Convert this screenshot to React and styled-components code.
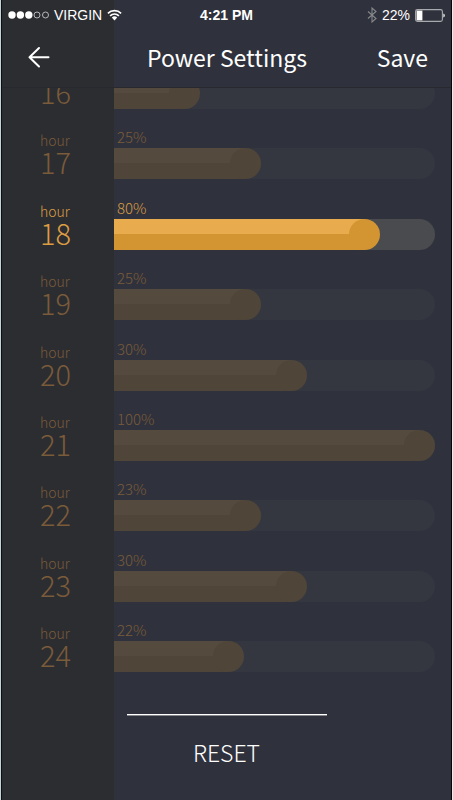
import { useState } from "react";
import styled, { createGlobalStyle } from "styled-components";

const GlobalStyle = createGlobalStyle`
  *, *::before, *::after { box-sizing: border-box; }
  body {
    margin: 0;
    background: #2f323c;
    font-family: "Noto Sans CJK SC", "Open Sans", sans-serif;
  }
  button {
    margin: 0;
    padding: 0;
    border: 0;
    background: none;
    color: inherit;
    font: inherit;
    cursor: pointer;
  }
`;

const SIDEBAR = "112px";

// Layout base
const Screen = styled.div`
  display: flex;
  flex-direction: column;
  height: 100dvh;
  min-height: 600px;
  overflow: hidden;
  color: #fff;
  border-left: 1px solid #0a1018;
  border-right: 1px solid #06070a;
  background: linear-gradient(to right, #2c2d31 ${SIDEBAR}, #2f323c 0);
`;

const Frame = styled.div`
  border-left: 1px solid #c9d0d4;
  border-right: 1px solid #eceded;
`;

// Status bar
const StatusBar = styled.div`
  display: grid;
  grid-template-columns: 1fr auto 1fr;
  align-items: center;
  height: 30px;
  padding: 0 6px;
  font-family: "Liberation Sans", Arial, sans-serif;
  font-size: 14px;
  line-height: 30px;
`;

const StatusGroup = styled.div`
  display: flex;
  align-items: center;
  justify-content: ${({ $end }) => ($end ? "flex-end" : "flex-start")};
  gap: 5px;
`;

const Clock = styled.time`
  font-weight: 700;
`;

// Header
const Header = styled.header`
  display: grid;
  grid-template-columns: 1fr auto 1fr;
  align-items: center;
  height: 58px;
  padding: 0 23px 4px 24px;
  font-size: 23px;
  line-height: 32px;
  border-bottom: 1px solid #28292f;
`;

const Title = styled.h1`
  margin: 0;
  font-size: 23px;
  font-weight: 400;
`;

const BackButton = styled.button`
  display: flex;
  justify-self: start;
`;

const SaveButton = styled.button`
  justify-self: end;
`;

// Hour list, first row is half scrolled under the header
const Viewport = styled.main`
  flex: 1;
  min-height: 0;
  overflow: hidden;
`;

const List = styled.ul`
  display: flex;
  flex-direction: column;
  justify-content: space-between;
  height: calc(100% + 30px);
  margin: -30px 0 0;
  padding: 0;
  list-style: none;
`;

const Row = styled.li`
  display: grid;
  grid-template-columns: ${SIDEBAR} 1fr;
  height: 51px;
  color: ${({ $active }) => ($active ? "#dc9d43" : "#7a5b3a")};
`;

const HourLabel = styled.label`
  display: flex;
  flex-direction: column;
  padding: 4px 0 0 38px;
  font-size: 14px;
  font-weight: 300;
  line-height: 16px;
`;

const HourNumber = styled.span`
  font-size: 29px;
  font-weight: 200;
  line-height: 26px;
`;

const Level = styled.div`
  padding-right: 16px;
`;

const Percent = styled.output`
  display: block;
  height: 20px;
  padding-left: 3px;
  font-size: 15px;
  font-weight: 200;
  line-height: 18px;
`;

const Slider = styled.input`
  --light: ${({ $active }) => ($active ? "#e8ab4d" : "#554a3e")};
  --dark: ${({ $active }) => ($active ? "#d39432" : "#504539")};
  --rail: ${({ $active }) => ($active ? "#4a4b4e" : "#343740")};
  display: block;
  width: 100%;
  height: 31px;
  margin: 0;
  appearance: none;
  border-radius: 0 16px 16px 0;
  cursor: pointer;
  background:
    linear-gradient(var(--light) 50%, var(--dark) 50%) 0 0 /
      calc(16px + (100% - 31px) * var(--level)) 100% no-repeat,
    var(--rail);

  &::-webkit-slider-thumb {
    appearance: none;
    width: 31px;
    height: 31px;
    border-radius: 50%;
    background: var(--dark);
  }

  &::-moz-range-thumb {
    width: 31px;
    height: 31px;
    border: 0;
    border-radius: 50%;
    background: var(--dark);
  }
`;

// Footer
const Footer = styled.footer`
  display: flex;
  flex-direction: column;
  align-items: center;
  gap: 20px;
  height: 128px;
  padding-top: 42px;
`;

const Divider = styled.hr`
  width: 200px;
  height: 2px;
  margin: 0;
  border: 0;
  background: linear-gradient(#fff 50%, #85868a 50%);
`;

const ResetButton = styled.button`
  font-size: 23px;
  font-weight: 300;
  line-height: 32px;
`;

const HOURS = [
  { hour: 16, percent: 20, level: 19 },
  { hour: 17, percent: 25, level: 40 },
  { hour: 18, percent: 80, level: 81, active: true },
  { hour: 19, percent: 25, level: 40 },
  { hour: 20, percent: 30, level: 56 },
  { hour: 21, percent: 100, level: 100 },
  { hour: 22, percent: 23, level: 40 },
  { hour: 23, percent: 30, level: 56 },
  { hour: 24, percent: 22, level: 34 },
];

const Signal = () => (
  <svg width="41" height="8" viewBox="0 0 41 8" aria-hidden="true">
    {[4, 12.4, 20.8].map((x) => (
      <circle key={x} cx={x} cy="4" r="3.7" fill="#fff" />
    ))}
    {[29, 37.5].map((x) => (
      <circle key={x} cx={x} cy="4" r="3" fill="none" stroke="#c4c5c8" strokeWidth="0.9" />
    ))}
  </svg>
);

const Wifi = () => (
  <svg width="15" height="12" viewBox="0 0 15 12" aria-hidden="true">
    <g fill="none" stroke="#fff" strokeWidth="1.7">
      <path d="M0.9 4.3a9.4 9.4 0 0 1 13.2 0" />
      <path d="M3.1 6.8a6.3 6.3 0 0 1 8.8 0" />
    </g>
    <path d="M4.8 8.6a4 4 0 0 1 5.4 0L7.5 11.4z" fill="#fff" />
  </svg>
);

const Bluetooth = () => (
  <svg width="10" height="16" viewBox="0 0 10 16" aria-hidden="true">
    <path d="M1 4.5l8 7-4 3.5V1l4 3.5-8 7" fill="none" stroke="#86888d" strokeWidth="1.1" />
  </svg>
);

const Battery = () => (
  <svg width="30" height="13" viewBox="0 0 30 13" aria-hidden="true">
    <rect x="0.6" y="0.6" width="26.8" height="11.8" rx="1.8" fill="none" stroke="#a9aaad" strokeWidth="1.1" />
    <rect x="1.6" y="1.6" width="5.8" height="9.8" fill="#fff" />
    <path d="M28.4 4.4v4.2q1.4-.6 1.4-2.1t-1.4-2.1z" fill="#fff" />
  </svg>
);

const BackArrow = () => (
  <svg width="24" height="24" viewBox="0 0 24 24" aria-hidden="true">
    <path
      d="M13 3L3.5 12.2L13 21.5M3.5 12.2H22.5"
      fill="none"
      stroke="#fff"
      strokeWidth="2"
      strokeLinecap="round"
      strokeLinejoin="round"
    />
  </svg>
);

export default function App() {
  const [hours, setHours] = useState(HOURS);

  const changeLevel = (hour, value) =>
    setHours((rows) =>
      rows.map((row) => (row.hour === hour ? { ...row, percent: value, level: value } : row))
    );

  return (
    <Frame>
      <GlobalStyle />
      <Screen>
        <StatusBar>
          <StatusGroup>
            <Signal />
            <span>VIRGIN</span>
            <Wifi />
          </StatusGroup>
          <Clock>4:21 PM</Clock>
          <StatusGroup $end>
            <Bluetooth />
            <span>22%</span>
            <Battery />
          </StatusGroup>
        </StatusBar>

        <Header>
          <BackButton type="button" aria-label="Back">
            <BackArrow />
          </BackButton>
          <Title>Power Settings</Title>
          <SaveButton type="button">Save</SaveButton>
        </Header>

        <Viewport>
          <List>
            {hours.map(({ hour, percent, level, active }) => (
              <Row key={hour} $active={active}>
                <HourLabel htmlFor={`hour-${hour}`}>
                  hour
                  <HourNumber>{hour}</HourNumber>
                </HourLabel>
                <Level>
                  <Percent htmlFor={`hour-${hour}`}>{percent}%</Percent>
                  <Slider
                    id={`hour-${hour}`}
                    type="range"
                    min="0"
                    max="100"
                    value={level}
                    $active={active}
                    style={{ "--level": level / 100 }}
                    onChange={(e) => changeLevel(hour, Number(e.target.value))}
                  />
                </Level>
              </Row>
            ))}
          </List>
        </Viewport>

        <Footer>
          <Divider />
          <ResetButton type="button" onClick={() => setHours(HOURS)}>
            RESET
          </ResetButton>
        </Footer>
      </Screen>
    </Frame>
  );
}
